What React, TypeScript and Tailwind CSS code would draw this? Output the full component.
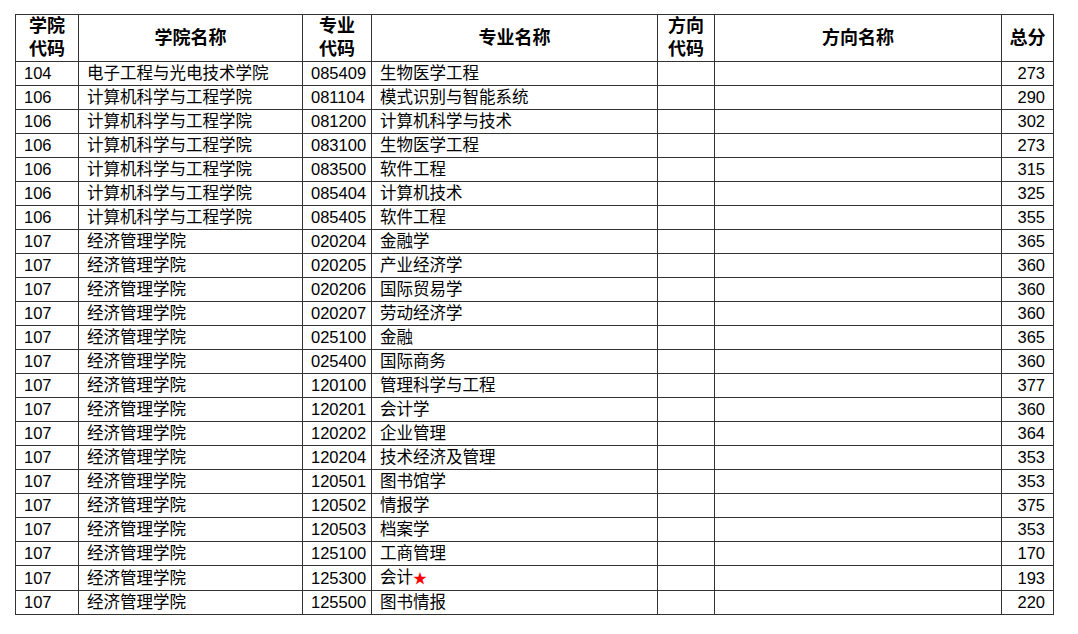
import React from "react";

type Row = [string, string, string, string, string];

const rows: Row[] = [
  ["104", "电子工程与光电技术学院", "085409", "生物医学工程", "273"],
  ["106", "计算机科学与工程学院", "081104", "模式识别与智能系统", "290"],
  ["106", "计算机科学与工程学院", "081200", "计算机科学与技术", "302"],
  ["106", "计算机科学与工程学院", "083100", "生物医学工程", "273"],
  ["106", "计算机科学与工程学院", "083500", "软件工程", "315"],
  ["106", "计算机科学与工程学院", "085404", "计算机技术", "325"],
  ["106", "计算机科学与工程学院", "085405", "软件工程", "355"],
  ["107", "经济管理学院", "020204", "金融学", "365"],
  ["107", "经济管理学院", "020205", "产业经济学", "360"],
  ["107", "经济管理学院", "020206", "国际贸易学", "360"],
  ["107", "经济管理学院", "020207", "劳动经济学", "360"],
  ["107", "经济管理学院", "025100", "金融", "365"],
  ["107", "经济管理学院", "025400", "国际商务", "360"],
  ["107", "经济管理学院", "120100", "管理科学与工程", "377"],
  ["107", "经济管理学院", "120201", "会计学", "360"],
  ["107", "经济管理学院", "120202", "企业管理", "364"],
  ["107", "经济管理学院", "120204", "技术经济及管理", "353"],
  ["107", "经济管理学院", "120501", "图书馆学", "353"],
  ["107", "经济管理学院", "120502", "情报学", "375"],
  ["107", "经济管理学院", "120503", "档案学", "353"],
  ["107", "经济管理学院", "125100", "工商管理", "170"],
  ["107", "经济管理学院", "125300", "会计★", "193"],
  ["107", "经济管理学院", "125500", "图书情报", "220"],
];

const th = "border border-[#333] text-center font-bold text-[18px] leading-[23px] p-0 align-middle";
const td = "border border-[#333] h-[24px] p-0 px-[8px] text-[16.5px] leading-[23px] align-middle whitespace-nowrap";

const Major = ({ name }: { name: string }) => {
  if (name.endsWith("★")) {
    return (
      <>
        {name.slice(0, -1)}
        <span className="text-[#ff0000] text-[14px]">★</span>
      </>
    );
  }
  return <>{name}</>;
};

export default function App() {
  return (
    <div
      className="bg-white w-[1078px] h-[634px] pt-[14px] pl-[15px] text-black"
      style={{ fontFamily: '"Liberation Sans", "Noto Sans CJK SC", sans-serif' }}
    >
      <table className="table-fixed border-collapse w-[1038px]">
        <colgroup>
          <col className="w-[63px]" />
          <col className="w-[224px]" />
          <col className="w-[69px]" />
          <col className="w-[286px]" />
          <col className="w-[57px]" />
          <col className="w-[287px]" />
          <col className="w-[52px]" />
        </colgroup>
        <thead>
          <tr className="h-[47px]">
            <th className={th}>学院<br />代码</th>
            <th className={th}>学院名称</th>
            <th className={th}>专业<br />代码</th>
            <th className={th}>专业名称</th>
            <th className={th}>方向<br />代码</th>
            <th className={th}>方向名称</th>
            <th className={th}>总分</th>
          </tr>
        </thead>
        <tbody>
          {rows.map((r, i) => (
            <tr key={i}>
              <td className={td}>{r[0]}</td>
              <td className={td}>{r[1]}</td>
              <td className={td}>{r[2]}</td>
              <td className={td}><Major name={r[3]} /></td>
              <td className={td}></td>
              <td className={td}></td>
              <td className={`${td} text-right`}>{r[4]}</td>
            </tr>
          ))}
        </tbody>
      </table>
    </div>
  );
}
